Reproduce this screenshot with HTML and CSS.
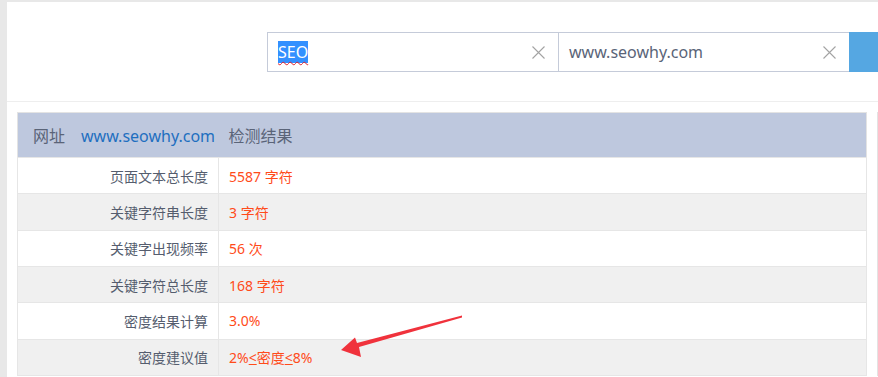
FILE: index.html
```html
<!DOCTYPE html>
<html lang="zh-CN">
<head>
  <meta charset="UTF-8">
  <meta name="viewport" content="width=device-width, initial-scale=1.0">
  <title>关键词密度检测</title>
  <link rel="stylesheet" href="styles.css">
</head>
<body>
  <div class="page">
    <div class="search-bar">
      <div class="search-field">
        <span class="field-text"><span class="selected">SEO</span></span>
        <svg class="clear" width="13" height="13" viewBox="0 0 13 13"><path d="M0.5 0.5L12.5 12.5M12.5 0.5L0.5 12.5" stroke="#a3a3a3" stroke-width="1.1"/></svg>
      </div>
      <div class="search-field">
        <span class="field-text">www.seowhy.com</span>
        <svg class="clear" width="13" height="13" viewBox="0 0 13 13"><path d="M0.5 0.5L12.5 12.5M12.5 0.5L0.5 12.5" stroke="#a3a3a3" stroke-width="1.1"/></svg>
      </div>
      <button class="search-btn"></button>
    </div>

    <div class="content">
      <table class="result-table">
        <colgroup>
          <col class="col-label">
          <col>
        </colgroup>
        <thead>
          <tr>
            <th class="label-col"><span class="head-label">网址</span><a class="site-link" href="#">www.seowhy.com</a></th>
            <th>检测结果</th>
          </tr>
        </thead>
        <tbody>
          <tr><td class="label-col">页面文本总长度</td><td class="value">5587 字符</td></tr>
          <tr><td class="label-col">关键字符串长度</td><td class="value">3 字符</td></tr>
          <tr><td class="label-col">关键字出现频率</td><td class="value">56 次</td></tr>
          <tr><td class="label-col">关键字符总长度</td><td class="value">168 字符</td></tr>
          <tr><td class="label-col">密度结果计算</td><td class="value">3.0%</td></tr>
          <tr><td class="label-col">密度建议值</td><td class="value">2%<u>&lt;</u>密度<u>&lt;</u>8%</td></tr>
        </tbody>
      </table>
      <div class="side-panel"></div>
    </div>

    <!-- annotation arrow -->
    <svg class="arrow" width="878" height="377" viewBox="0 0 878 377">
      <polygon points="462,315.5 462,317.5 359,347 361,357 341,350 355,337.5 357,343" fill="#f0323c"/>
    </svg>
  </div>
</body>
</html>
```

FILE: styles.css
```css
body {
  margin: 0;
  background-color: #e8e8e8;
  font-family: "Noto Sans", "Noto Sans CJK SC", sans-serif;
  color: #555d6e;
  overflow: hidden;
}

.page {
  margin: 2px 0 0 7px;
  background: #fff;
  height: 375px;
}

.search-bar {
  display: flex;
  height: 100px;
  padding: 30px 0 0 260px;
  box-sizing: border-box;
  border-bottom: 1px solid #eeeeee;
  overflow: hidden;
}

.search-field {
  width: 291px;
  flex-shrink: 0;
  height: 40px;
  box-sizing: border-box;
  border: 1px solid #c5cbd9;
  border-right: none;
  display: flex;
  align-items: center;
  justify-content: space-between;
  padding: 0 13px 0 10px;
  font-size: 16px;
  color: #5a6478;
}

.selected {
  background: #3390ff;
  color: #fff;
  text-decoration: underline wavy #e0202a;
  text-underline-offset: 3px;
  text-decoration-thickness: 1px;
}

.search-btn {
  width: 40px;
  height: 40px;
  flex-shrink: 0;
  border: none;
  background: #55a7e2;
}

.content {
  display: flex;
  gap: 10px;
  padding: 10px 0 0 10px;
}

.result-table {
  width: 850px;
  flex-shrink: 0;
  table-layout: fixed;
  border-collapse: collapse;
  border: 1px solid #e3e3e3;
  font-size: 14px;
}

.col-label {
  width: 201px;
}

.result-table th {
  height: 44px;
  background: #bec8de;
  font-weight: normal;
  font-size: 16px;
  text-align: left;
  padding: 0 10px;
  color: #5a6478;
  white-space: nowrap;
}

.result-table th.label-col {
  padding-left: 15px;
}

.head-label {
  margin-right: 16px;
}

.site-link {
  color: #1e6fc0;
  text-decoration: none;
}

.result-table td {
  height: 35px;
  border: 1px solid #e6e6e6;
  padding: 0 10px;
  white-space: nowrap;
}

.result-table td.label-col {
  text-align: right;
}

.result-table tbody tr:nth-child(even) {
  background: #f0f0f0;
}

.value {
  color: #ff4b1a;
}

.value u {
  text-underline-offset: 1px;
}

.side-panel {
  width: 100px;
  height: 262px;
  border: 1px solid #e3e3e3;
}

.arrow {
  position: absolute;
  top: 0;
  left: 0;
  pointer-events: none;
}
```
